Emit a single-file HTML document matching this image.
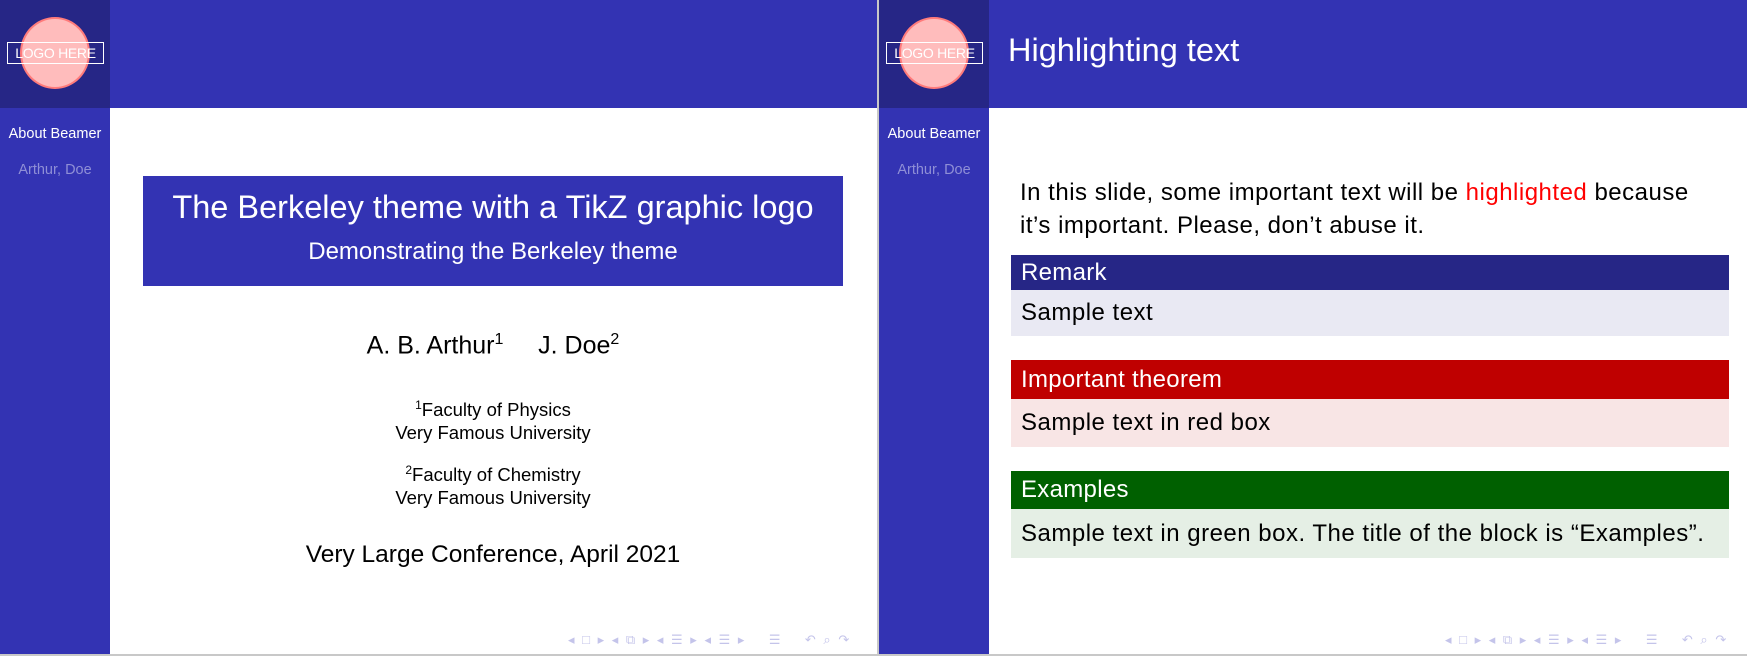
<!DOCTYPE html>
<html><head><meta charset="utf-8"><style>
*{margin:0;padding:0;box-sizing:border-box}
body{width:1747px;height:656px;position:relative;background:#fff;font-family:"Liberation Sans","DejaVu Sans",sans-serif;overflow:hidden}
.a{position:absolute}
.logo{background:#262686;width:110px;height:108px;top:0}
.circ{width:70px;height:72px;border-radius:50%;background:#ffbcbc;border:2px solid #ff7b7b;top:17px}
.lbox{border:1px solid #fff;color:#fff;font-size:14px;height:22px;line-height:20px;text-align:center;top:42px;width:97px;letter-spacing:-0.3px}
.side{background:#3333b3;width:110px;height:546px;top:108px}
.hdr{background:#3333b3;height:108px;top:0}
.nav1{color:#fff;font-size:14.5px;width:110px;text-align:center;top:126px}
.nav2{color:#8f8fd6;font-size:14.5px;width:110px;text-align:center;top:162px}
.c{text-align:center;color:#000}
.bh{color:#fff;font-size:24px;padding-left:10px;left:1011px;width:718px;letter-spacing:0.3px}
.bb{color:#000;font-size:24px;padding-left:10px;left:1011px;width:718px;letter-spacing:0.5px}
.navi{color:#c4c4ea;font-size:13px;top:632px;letter-spacing:2px;white-space:nowrap}
</style></head><body>
<!-- slide 1 -->
<div class="a hdr" style="left:110px;width:767px"></div>
<div class="a side" style="left:0"></div>
<div class="a logo" style="left:0"></div>
<div class="a circ" style="left:20px"></div>
<div class="a lbox" style="left:7px">LOGO HERE</div>
<div class="a nav1" style="left:0">About Beamer</div>
<div class="a nav2" style="left:0">Arthur, Doe</div>
<div class="a" style="left:143px;top:176px;width:700px;height:110px;background:#3333b3"></div>
<div class="a c" style="left:143px;top:189px;width:700px;color:#fff;font-size:32.5px">The Berkeley theme with a TikZ graphic logo</div>
<div class="a c" style="left:143px;top:238px;width:700px;color:#fff;font-size:24px">Demonstrating the Berkeley theme</div>
<div class="a c" style="left:143px;top:331px;width:700px;font-size:25px">A. B. Arthur<sup style="font-size:16px">1</sup>&nbsp;&nbsp;&nbsp;&nbsp;&nbsp;J. Doe<sup style="font-size:16px">2</sup></div>
<div class="a c" style="left:143px;top:394px;width:700px;font-size:18.5px;line-height:23px"><sup style="font-size:12px">1</sup>Faculty of Physics<br>Very Famous University</div>
<div class="a c" style="left:143px;top:459px;width:700px;font-size:18.5px;line-height:23px"><sup style="font-size:12px">2</sup>Faculty of Chemistry<br>Very Famous University</div>
<div class="a c" style="left:143px;top:541px;width:700px;font-size:24.5px">Very Large Conference, April 2021</div>
<div class="a navi" style="left:568px">◂ □ ▸ ◂ ⧉ ▸ ◂ ☰ ▸ ◂ ☰ ▸&nbsp;&nbsp;&nbsp; ☰&nbsp;&nbsp;&nbsp; ↶ ⌕ ↷</div>
<div class="a" style="left:877px;top:0;width:2px;height:656px;background:#c8c8c8"></div>
<!-- slide 2 -->
<div class="a hdr" style="left:989px;width:758px"></div>
<div class="a side" style="left:879px"></div>
<div class="a logo" style="left:879px"></div>
<div class="a circ" style="left:899px"></div>
<div class="a lbox" style="left:886px">LOGO HERE</div>
<div class="a nav1" style="left:879px">About Beamer</div>
<div class="a nav2" style="left:879px">Arthur, Doe</div>
<div class="a" style="left:1008px;top:32px;color:#fff;font-size:32.5px">Highlighting text</div>
<div class="a" style="left:1020px;top:176px;font-size:24px;line-height:33px;width:720px;white-space:nowrap;letter-spacing:0.5px">In this slide, some important text will be <span style="color:#f00">highlighted</span> because<br>it’s important. Please, don’t abuse it.</div>
<div class="a bh" style="top:255px;height:35px;line-height:35px;background:#262686">Remark</div>
<div class="a bb" style="top:290px;height:46px;line-height:46px;background:#e9e9f3">Sample text</div>
<div class="a bh" style="top:360px;height:39px;line-height:39px;background:#bf0000">Important theorem</div>
<div class="a bb" style="top:399px;height:48px;line-height:48px;background:#f8e5e5">Sample text in red box</div>
<div class="a bh" style="top:471px;height:38px;line-height:38px;background:#006000">Examples</div>
<div class="a bb" style="top:509px;height:49px;line-height:49px;background:#e5efe5">Sample text in green box. The title of the block is “Examples”.</div>
<div class="a navi" style="left:1445px">◂ □ ▸ ◂ ⧉ ▸ ◂ ☰ ▸ ◂ ☰ ▸&nbsp;&nbsp;&nbsp; ☰&nbsp;&nbsp;&nbsp; ↶ ⌕ ↷</div>
<div class="a" style="left:0;top:654px;width:1747px;height:2px;background:#c8c8c8"></div>
</body></html>
